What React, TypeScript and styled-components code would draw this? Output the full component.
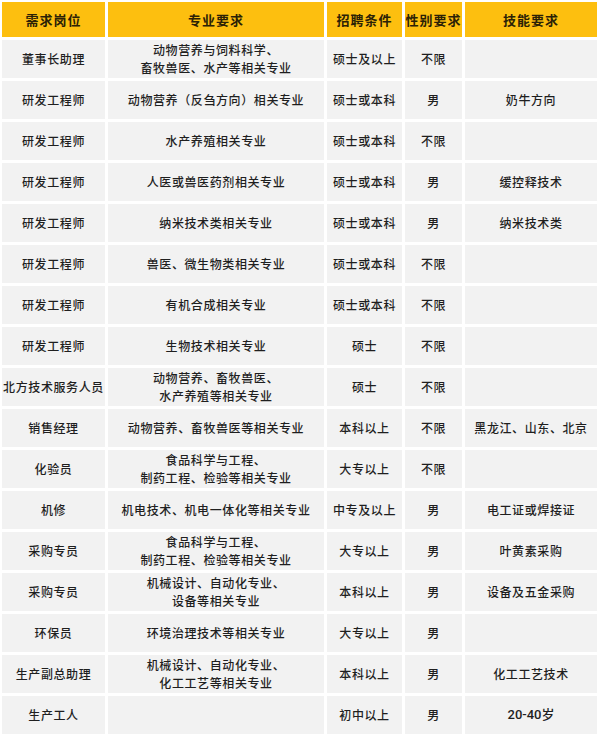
import React from 'react';
import styled, { createGlobalStyle } from 'styled-components';

const GlobalStyle = createGlobalStyle`
  html, body {
    margin: 0;
    padding: 0;
    background: #ffffff;
  }
  body {
    font-family: "Noto Sans CJK SC", "Noto Sans", sans-serif;
    color: #1f1f1f;
  }
`;

const Table = styled.div`
  display: grid;
  grid-template-columns: 103px 216px 75px 57px 132px;
  grid-template-rows: 35px;
  grid-auto-rows: 38px;
  gap: 3px;
  padding: 2px 3px 3px 2px;
  width: 600px;
  box-sizing: border-box;
`;

const HeadCell = styled.div`
  background: #fdbf0f;
  display: flex;
  align-items: center;
  justify-content: center;
  font-size: 13px;
  font-weight: 700;
  letter-spacing: 1px;
  color: #2b2206;
`;

const Cell = styled.div<{ $latin?: boolean }>`
  background: #f2f2f2;
  display: flex;
  align-items: center;
  justify-content: center;
  text-align: center;
  line-height: 18px;
  font-weight: 500;
  white-space: pre-line;
  letter-spacing: ${p => (p.$latin ? '0' : '0.6px')};
  font-family: ${p =>
    p.$latin ? '"Roboto", "Noto Sans CJK SC", sans-serif' : '"Noto Sans CJK SC", sans-serif'};
  font-size: ${p => (p.$latin ? '13px' : '12px')};
`;

const headers = ['需求岗位', '专业要求', '招聘条件', '性别要求', '技能要求'];

const rows: string[][] = [
  ['董事长助理', '动物营养与饲料科学、\n畜牧兽医、水产等相关专业', '硕士及以上', '不限', ''],
  ['研发工程师', '动物营养（反刍方向）相关专业', '硕士或本科', '男', '奶牛方向'],
  ['研发工程师', '水产养殖相关专业', '硕士或本科', '不限', ''],
  ['研发工程师', '人医或兽医药剂相关专业', '硕士或本科', '男', '缓控释技术'],
  ['研发工程师', '纳米技术类相关专业', '硕士或本科', '男', '纳米技术类'],
  ['研发工程师', '兽医、微生物类相关专业', '硕士或本科', '不限', ''],
  ['研发工程师', '有机合成相关专业', '硕士或本科', '不限', ''],
  ['研发工程师', '生物技术相关专业', '硕士', '不限', ''],
  ['北方技术服务人员', '动物营养、畜牧兽医、\n水产养殖等相关专业', '硕士', '不限', ''],
  ['销售经理', '动物营养、畜牧兽医等相关专业', '本科以上', '不限', '黑龙江、山东、北京'],
  ['化验员', '食品科学与工程、\n制药工程、检验等相关专业', '大专以上', '不限', ''],
  ['机修', '机电技术、机电一体化等相关专业', '中专及以上', '男', '电工证或焊接证'],
  ['采购专员', '食品科学与工程、\n制药工程、检验等相关专业', '大专以上', '男', '叶黄素采购'],
  ['采购专员', '机械设计、自动化专业、\n设备等相关专业', '本科以上', '男', '设备及五金采购'],
  ['环保员', '环境治理技术等相关专业', '大专以上', '男', ''],
  ['生产副总助理', '机械设计、自动化专业、\n化工工艺等相关专业', '本科以上', '男', '化工工艺技术'],
  ['生产工人', '', '初中以上', '男', '20-40岁'],
];

export default function App() {
  return (
    <>
      <GlobalStyle />
      <Table>
        {headers.map(h => (
          <HeadCell key={h}>{h}</HeadCell>
        ))}
        {rows.map((row, i) =>
          row.map((text, j) => (
            <Cell key={`${i}-${j}`} $latin={/^[0-9]/.test(text)}>
              {text}
            </Cell>
          ))
        )}
      </Table>
    </>
  );
}
